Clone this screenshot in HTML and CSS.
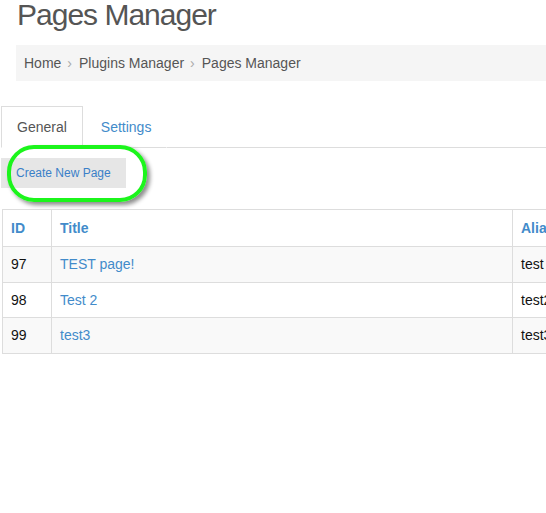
FILE: index.html
```html
<!DOCTYPE html>
<html>
<head>
<meta charset="utf-8">
<link rel="stylesheet" href="styles.css">
</head>
<body>
<div class="page">
  <header class="head">
    <h1 class="title">Pages Manager</h1>
    <ol class="breadcrumb">
      <li>Home</li>
      <li class="sep">›</li>
      <li>Plugins Manager</li>
      <li class="sep">›</li>
      <li>Pages Manager</li>
    </ol>
  </header>

  <ul class="tabs">
    <li class="tab active">General</li>
    <li class="tab">Settings</li>
    <li class="tab-rest"></li>
  </ul>

  <div class="toolbar">
    <span class="btn">Create New Page</span>
    <span class="highlight"></span>
  </div>

  <table class="grid">
    <colgroup>
      <col class="c-id">
      <col class="c-title">
      <col class="c-alias">
    </colgroup>
    <thead>
      <tr><th>ID</th><th>Title</th><th>Alias</th></tr>
    </thead>
    <tbody>
      <tr class="odd"><td>97</td><td><span class="link">TEST page!</span></td><td>test</td></tr>
      <tr><td>98</td><td><span class="link">Test 2</span></td><td>test2</td></tr>
      <tr class="odd"><td>99</td><td><span class="link">test3</span></td><td>test3</td></tr>
    </tbody>
  </table>
</div>
</body>
</html>
```

FILE: styles.css
```css
html, body {
  margin: 0;
  padding: 0;
  background: #fff;
  overflow: hidden;
}
body {
  font-family: "Liberation Sans", Arial, sans-serif;
  font-size: 14px;
  color: #333;
  width: 546px;
  height: 513px;
}
.page {
  position: relative;
  width: 546px;
  height: 513px;
  overflow: hidden;
}
.head {
  padding-left: 16px;
}
.title {
  margin: 0;
  padding: 0 0 0 1px;
  font-size: 30px;
  font-weight: normal;
  letter-spacing: -1px;
  line-height: 34px;
  color: #555;
  height: 45px;
  box-sizing: border-box;
  position: relative;
  top: -2px;
}
.breadcrumb {
  list-style: none;
  margin: 0;
  padding: 8px 8px;
  line-height: 20px;
  background: #f5f5f5;
  color: #555;
  display: flex;
  width: 600px;
}
.breadcrumb li.sep {
  color: #aaa;
  padding: 0 7px 0 6px;
}
.tabs {
  list-style: none;
  margin: 25px 0 0 0;
  padding: 0 0 0 1px;
  display: flex;
  line-height: 20px;
}
.tab {
  padding: 10px 15px 10px;
  margin-right: 2px;
  border: 1px solid transparent;
  border-bottom: 1px solid #ddd;
  color: #428bca;
}
.tab.active {
  border-color: #ddd;
  border-bottom-color: transparent;
  color: #555;
  background: #fff;
}
.tab-rest {
  flex: 1;
  border-bottom: 1px solid #ddd;
  margin-left: -2px;
}
.toolbar {
  position: relative;
  padding: 10px 0 21px 1px;
}
.btn {
  display: inline-block;
  background: #e6e6e6;
  color: #3a80c8;
  font-size: 12px;
  line-height: 18px;
  padding: 6px 15px;
}
.highlight {
  position: absolute;
  left: 7px;
  top: -3px;
  width: 132px;
  height: 49px;
  border: 4px solid #1cf51c;
  border-radius: 27px;
  box-shadow: 3px 3px 4px rgba(0, 0, 0, 0.45);
}
.grid {
  border-collapse: collapse;
  margin-left: 2px;
  width: 640px;
  table-layout: fixed;
}
.c-id { width: 49px; }
.c-title { width: 461px; }
.c-alias { width: 130px; }
.grid th, .grid td {
  border: 1px solid #ddd;
  padding: 8px 8px;
  text-align: left;
  white-space: nowrap;
  overflow: hidden;
}
.grid th {
  color: #428bca;
  font-weight: bold;
  line-height: 20px;
}
.grid td {
  line-height: 18.5px;
  color: #111;
}
.grid tr.odd td {
  background: #f9f9f9;
}
.link {
  color: #428bca;
}
```
